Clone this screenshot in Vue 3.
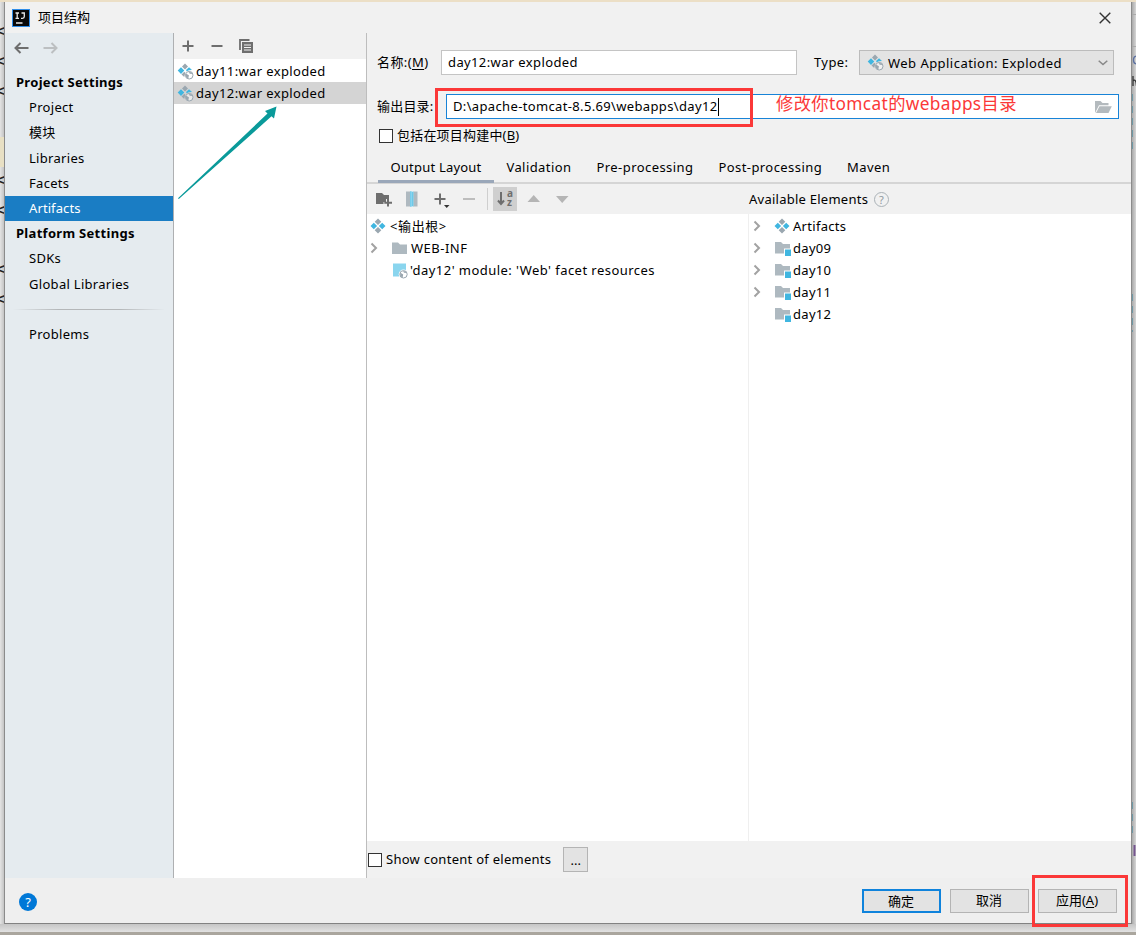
<template>
    <div class="screen">
        <div class="edge edge-left">
            <p v-for="(mark, index) in editorMarks" :key="index" :class="{ caret: index === 4 }">{{ mark }}</p>
        </div>

        <div class="window">
            <header class="title-bar">
                <svg class="logo" width="18" height="18" viewBox="0 0 18 18">
                    <rect x="0.5" y="0.5" width="17" height="17" fill="#080808" stroke="#2f8de8" />
                    <path d="M3.5 4H7M5.2 4V9M3.5 9.3H7M9.5 4H12.3V7.5Q12.3 9.3 10.5 9.3H9M4 14H10.5" fill="none"
                        stroke="#e8e8e8" stroke-width="1.3" />
                </svg>
                <span class="title">项目结构</span>
                <svg class="close" width="12" height="12" viewBox="0 0 12 12">
                    <path d="M0.7 0.7L11.3 11.3M11.3 0.7L0.7 11.3" stroke="#333" stroke-width="1.4" />
                </svg>
            </header>

            <div class="body">
                <aside class="sidebar">
                    <div class="history">
                        <svg width="15" height="12" viewBox="0 0 15 12">
                            <path d="M14.5 6H1.5M6.5 1L1.5 6L6.5 11" fill="none" stroke="#6e6e6e" stroke-width="2" />
                        </svg>
                        <svg width="15" height="12" viewBox="0 0 15 12">
                            <path d="M0.5 6H13.5M8.5 1L13.5 6L8.5 11" fill="none" stroke="#bcbfc1"
                                stroke-width="2" />
                        </svg>
                    </div>
                    <template v-for="(item, index) in menu" :key="index">
                        <div v-if="item.type === 'line'" class="menu-line"><i></i></div>
                        <div v-else class="menu-item" :class="[item.type, { active: item.label === selectedMenu }]"
                            @click="selectMenu(item)">{{ item.label }}</div>
                    </template>
                </aside>

                <section class="artifacts">
                    <div class="list-tools">
                        <svg width="12" height="12" viewBox="0 0 12 12">
                            <path d="M6 0.5V11.5M0.5 6H11.5" stroke="#6e6e6e" stroke-width="2" />
                        </svg>
                        <svg width="12" height="12" viewBox="0 0 12 12">
                            <path d="M0.5 6H11.5" stroke="#6e6e6e" stroke-width="2" />
                        </svg>
                        <svg class="copy" width="14" height="14" viewBox="0 0 14 14">
                            <path d="M1 11V1H10.5" fill="none" stroke="#6e6e6e" stroke-width="1.8" />
                            <path d="M3 3H14V14H3Z" fill="#6e6e6e" />
                            <path d="M5 6H12M5 8.5H12M5 11H12" stroke="#f1f1f1" stroke-width="1.1" />
                        </svg>
                    </div>
                    <div v-for="name in artifactList" :key="name" class="artifact"
                        :class="{ active: name === selectedArtifact }" @click="selectedArtifact = name">
                        <svg width="17" height="17" viewBox="0 0 17 17">
                            <use href="#war-icon" />
                        </svg>
                        <span>{{ name }}</span>
                    </div>
                </section>

                <main class="details">
                    <div class="form-row name-row">
                        <label class="name-label">名称:(<u>M</u>)</label>
                        <input class="name-input" v-model="artifactName" />
                        <label class="type-label">Type:</label>
                        <div class="combo">
                            <svg width="17" height="17" viewBox="0 0 17 17">
                                <use href="#war-icon" />
                            </svg>
                            <span>Web Application: Exploded</span>
                            <svg class="combo-arrow" width="10" height="6" viewBox="0 0 10 6">
                                <path d="M0.7 0.8L5 4.6L9.3 0.8" fill="none" stroke="#888" stroke-width="1.5" />
                            </svg>
                        </div>
                    </div>
                    <div class="form-row path-row">
                        <label class="path-label">输出目录:</label>
                        <div class="path-input">
                            <span>{{ outputPath }}</span><i class="cursor"></i>
                            <svg class="open-folder" width="17" height="12" viewBox="0 0 17 12">
                                <path d="M0 12V0H5.5L7.5 2H13.5V4.2H4L0.8 10.5Z" fill="#b4babe" />
                                <path d="M4.5 5.3H16.8L13.5 12H1Z" fill="#b4babe" />
                            </svg>
                        </div>
                    </div>
                    <div class="check-row include-row">
                        <i class="check"></i>
                        <span>包括在项目构建中(<u>B</u>)</span>
                    </div>

                    <nav class="tabs">
                        <span v-for="tab in tabs" :key="tab" class="tab" :class="{ active: tab === selectedTab }"
                            @click="selectedTab = tab">{{ tab }}</span>
                    </nav>

                    <div class="layout-tools">
                        <div class="tools-left">
                            <svg width="117" height="24" viewBox="0 0 117 24">
                                <path d="M0 6H6L8 8H13V12H10V15H7.5V17H0Z" fill="#6e6e6e" />
                                <path d="M12 12V19.5M8.3 15.8H16" stroke="#6e6e6e" stroke-width="2" />
                                <path d="M30 4.5H34V19.5H30ZM37 4.5H41.5V19.5H37Z" fill="#afb9c0" />
                                <path d="M34 4.5H37.5V19.5H34Z" fill="#9bdcf3" />
                                <path d="M34.8 4.5V19.5M36.6 5.5V19.5" stroke="#40b6e0" stroke-width="1.2"
                                    stroke-dasharray="1 1" />
                                <path d="M64 6.5V17.5M58.5 12H69.5" stroke="#6e6e6e" stroke-width="2" />
                                <path d="M68 18H73.5L70.7 21Z" fill="#333" />
                                <path d="M87 12H99" stroke="#bdbdbd" stroke-width="2" />
                                <path d="M111.5 1V23" stroke="#cfcfcf" />
                            </svg>
                            <div class="sort">
                                <svg width="8" height="14" viewBox="0 0 8 14">
                                    <path d="M4 0V11M1 8.5L4 12L7 8.5" fill="none" stroke="#6e6e6e"
                                        stroke-width="2" />
                                </svg>
                                <div class="letters">
                                    <span>a</span>
                                    <span>z</span>
                                </div>
                            </div>
                            <svg width="43" height="24" viewBox="0 0 43 24">
                                <path d="M0.5 15H13L6.7 8Z M29 9H41.5L35.2 16Z" fill="#b5b5b5" />
                            </svg>
                        </div>
                        <div class="tools-right">
                            <span>Available Elements</span>
                            <i class="hint">?</i>
                        </div>
                    </div>

                    <div class="trees">
                        <div class="tree output-tree">
                            <div class="node root">
                                <svg width="16" height="16" viewBox="0 0 16 16">
                                    <use href="#artifact-icon" />
                                </svg>
                                <span>&lt;输出根&gt;</span>
                            </div>
                            <div class="node">
                                <svg class="chevron" width="8" height="12" viewBox="0 0 8 12">
                                    <use href="#chevron-icon" />
                                </svg>
                                <svg width="17" height="16" viewBox="0 0 17 16">
                                    <path d="M1 2.5H7L9 4.5H16V14H1Z" fill="#aeb9c0" />
                                </svg>
                                <span class="folder">WEB-INF</span>
                            </div>
                            <div class="node">
                                <i class="chevron"></i>
                                <svg width="17" height="17" viewBox="0 0 17 17">
                                    <path d="M2 1.5H15V14.5H2Z" fill="#8ad5ee" />
                                    <circle cx="12.5" cy="12.3" r="4.8" fill="#fff" />
                                    <circle cx="12.5" cy="12.3" r="3.7" fill="#fff" stroke="#9aa7b0" />
                                    <path d="M9.2 10.6L12.2 12.4L11.6 15.8L9.2 14Z M12 9L13 10.8L15.8 11L14.6 9.4Z"
                                        fill="#9aa7b0" />
                                </svg>
                                <span class="facet">'day12' module: 'Web' facet resources</span>
                            </div>
                        </div>
                        <div class="tree element-tree">
                            <div v-for="node in elements" :key="node.name" class="node">
                                <svg class="chevron" width="8" height="12" viewBox="0 0 8 12">
                                    <use v-if="node.children" href="#chevron-icon" />
                                </svg>
                                <svg width="17" height="16" viewBox="0 0 17 16">
                                    <use :href="node.icon" />
                                </svg>
                                <span>{{ node.name }}</span>
                            </div>
                        </div>
                    </div>

                    <div class="check-row show-row">
                        <i class="check"></i>
                        <span>Show content of elements</span>
                        <button class="more">...</button>
                    </div>
                </main>
            </div>

            <footer class="footer">
                <i class="help">?</i>
                <div class="buttons">
                    <button class="btn primary">确定</button>
                    <button class="btn">取消</button>
                    <button class="btn">应用(<u>A</u>)</button>
                </div>
            </footer>
        </div>

        <div class="edge edge-right">
            <svg width="5" height="922" viewBox="0 0 5 922">
                <path d="M0 12.5H5M0 44.5H5" stroke="#aaa" />
                <path d="M1 74V84M1 79Q4 76 4.5 84" fill="none" stroke="#333" stroke-width="1.3" />
                <path d="M5 54Q1.5 54 1.5 58T5 62" fill="none" stroke="#5a6fa0" stroke-width="1.3" />
                <path d="M0.5 92V152M0.5 292V330M0.5 800V832" stroke="#6d98a5" stroke-dasharray="7 5" />
                <path d="M2.5 843V854" stroke="#75558f" stroke-width="2" />
            </svg>
        </div>

        <!-- marks drawn over the dialog -->
        <div class="mark mark-path"></div>
        <div class="mark mark-apply"></div>
        <div class="note">修改你tomcat的webapps目录</div>
        <svg class="arrow" width="102" height="98" viewBox="0 0 102 98">
            <path d="M1 94.2L90.5 9.5L88 7L99.5 2.5L97 14.5L94.5 12.3L1.8 95Z" fill="#0a9a9a" />
        </svg>

        <svg class="defs" width="0" height="0">
            <defs>
                <g id="artifact-icon">
                    <path d="M8 0.5L11.3 3.8L8 7.1L4.7 3.8Z M8 8.9L11.3 12.2L8 15.5L4.7 12.2Z" fill="#9aa7b0" />
                    <path d="M3.8 4.7L7.1 8L3.8 11.3L0.5 8Z M12.2 4.7L15.5 8L12.2 11.3L8.9 8Z" fill="#40b6e0" />
                </g>
                <g id="war-icon">
                    <path d="M8 0.5L11 3.5L8 6.5L5 3.5Z M7.3 8.7L8.3 9.7L7.2 14L4.5 11.5Z" fill="#9aa7b0" />
                    <path d="M4 4.3L7.3 7.6L4 10.9L0.7 7.6Z M9 7L12 4.3L15 7L12 7.3L9.7 8.2Z" fill="#40b6e0" />
                    <circle cx="12.2" cy="12.2" r="3.8" fill="#fff" fill-opacity="0.5" stroke="#9aa7b0" />
                    <path d="M8.9 10.5L11.9 12.3L11.3 15.7L8.9 14Z M11.7 8.9L12.7 10.7L15.5 10.9L14.3 9.3Z"
                        fill="#9aa7b0" />
                </g>
                <g id="module-icon">
                    <path d="M1 2H7L9 4H16V8.5H10V13.5H1Z" fill="#aeb9c0" />
                    <path d="M11 9.5H17V16H11Z" fill="#40b6e0" />
                </g>
                <g id="chevron-icon">
                    <path d="M1.5 1.5L6 6L1.5 10.5" fill="none" stroke="#a2a2a2" stroke-width="2" />
                </g>
            </defs>
        </svg>
    </div>
</template>

<script setup>
import { ref } from 'vue'

const editorMarks = ['<', '<', '<', '', '', '<', '<', '', '<', '<']

const menu = [
    { type: 'heading', label: 'Project Settings' },
    { type: 'item', label: 'Project' },
    { type: 'item', label: '模块' },
    { type: 'item', label: 'Libraries' },
    { type: 'item', label: 'Facets' },
    { type: 'item', label: 'Artifacts' },
    { type: 'heading', label: 'Platform Settings' },
    { type: 'item', label: 'SDKs' },
    { type: 'item', label: 'Global Libraries' },
    { type: 'line' },
    { type: 'item', label: 'Problems' }
]
const selectedMenu = ref('Artifacts')
const selectMenu = (item) => {
    if (item.type === 'item') {
        selectedMenu.value = item.label
    }
}

const artifactList = ['day11:war exploded', 'day12:war exploded']
const selectedArtifact = ref('day12:war exploded')

const artifactName = ref('day12:war exploded')
const outputPath = ref('D:\\apache-tomcat-8.5.69\\webapps\\day12')

const tabs = ['Output Layout', 'Validation', 'Pre-processing', 'Post-processing', 'Maven']
const selectedTab = ref('Output Layout')

const elements = [
    { name: 'Artifacts', icon: '#artifact-icon', children: true },
    { name: 'day09', icon: '#module-icon', children: true },
    { name: 'day10', icon: '#module-icon', children: true },
    { name: 'day11', icon: '#module-icon', children: true },
    { name: 'day12', icon: '#module-icon', children: false }
]
</script>

<style>
body {
    background: #e2e2e2;
    overflow: hidden;
}
</style>

<style scoped>
.screen {
    position: relative;
    display: flex;
    width: 1136px;
    height: 935px;
    box-sizing: border-box;
    padding-top: 2px;
    overflow: hidden;
    background: linear-gradient(#ecdfc6 2px, #d5d5d5 2px, #d5d5d5 924px, #c6c6c6 924px, #e2e2e2 932px, #aaa69e 932px);
    font-family: "Noto Sans", "Noto Sans CJK SC", sans-serif;
    font-size: 13px;
    line-height: 20px;
    color: #000;
    white-space: nowrap;
}

i {
    font-style: normal;
}

svg {
    display: block;
    flex: none;
}

u {
    text-underline-offset: 2px;
}

.edge {
    height: 922px;
    overflow: hidden;
    box-sizing: border-box;
}

.edge-left {
    width: 4px;
    flex: none;
    padding-top: 16px;
    background: linear-gradient(90deg, #e4e4e4, #c4c4c4);
}

.edge-left p {
    margin: 0 0 0 -4px;
    height: 29.8px;
    line-height: 30px;
    font-family: "Liberation Mono", monospace;
    font-size: 15px;
    font-weight: bold;
    color: #222;
}

.edge-left .caret {
    background: #e8e0c4;
}

.edge-right {
    flex: 1;
    background: linear-gradient(90deg, #a9a9a9, #d6d6d6);
}

.window {
    width: 1126px;
    height: 921px;
    flex: none;
    display: flex;
    flex-direction: column;
    border-left: 1px solid #8b8b8b;
    border-right: 1px solid #8b8b8b;
    border-bottom: 1px solid #828282;
    background: #f1f1f1;
}

.title-bar {
    height: 31px;
    flex: none;
    display: flex;
    align-items: center;
    padding: 0 20px 0 7px;
    background: #f1f1f1;
}

.title {
    margin: -2px 0 0 8px;
}

.close {
    margin-left: auto;
}

.body {
    height: 845px;
    display: flex;
}

.sidebar {
    width: 168px;
    flex: none;
    background: #e5ebef;
    border-right: 1px solid #aeb0b2;
}

.history {
    height: 37px;
    box-sizing: border-box;
    display: flex;
    gap: 14px;
    padding: 9px 0 0 9px;
}

.menu-item {
    height: 25.2px;
    line-height: 25px;
    padding-left: 24px;
    letter-spacing: 0.3px;
}

.menu-item.heading {
    padding-left: 11px;
    font-weight: bold;
}

.menu-item.active {
    background: #1a7dc4;
    color: #fff;
    letter-spacing: 0.1px;
}

.menu-line {
    height: 25.2px;
    padding: 12px 8px 0;
    box-sizing: border-box;
}

.menu-line i {
    display: block;
    height: 1px;
    background: linear-gradient(90deg, transparent, #b4b7b9 30%, #b4b7b9 70%, transparent);
}

.artifacts {
    width: 192px;
    flex: none;
    background: #fff;
    border-right: 1px solid #bdbdbd;
}

.list-tools {
    height: 26px;
    display: flex;
    align-items: center;
    gap: 17px;
    padding-left: 8px;
    background: #f1f1f1;
}

.copy {
    margin-left: -1px;
}

.artifact {
    height: 22px;
    display: flex;
    align-items: center;
    padding: 1px 0 0 3px;
    box-sizing: border-box;
}

.list-tools + .artifact {
    height: 23px;
    padding-top: 2px;
}

.artifact span {
    margin-left: 2px;
    padding-bottom: 2px;
    letter-spacing: 0.37px;
}

.artifact.active {
    background: #d4d4d4;
}

.details {
    flex: 1;
    display: flex;
    flex-direction: column;
    background: #f1f1f1;
}

.form-row {
    display: flex;
    align-items: center;
    height: 25px;
    padding-left: 10px;
}

.form-row label {
    padding-bottom: 2px;
}

.name-row {
    margin-top: 17px;
}

.name-label {
    width: 64px;
    letter-spacing: 0.4px;
}

.name-input {
    width: 356px;
    height: 25px;
    box-sizing: border-box;
    padding: 0 6px 2px;
    border: 1px solid #c4c4c4;
    background: #fff;
    font: inherit;
    letter-spacing: 0.38px;
}

.type-label {
    width: 45px;
    margin-left: 17px;
    letter-spacing: 0.4px;
}

.combo {
    width: 255px;
    height: 25px;
    box-sizing: border-box;
    display: flex;
    align-items: center;
    padding: 0 5px 0 7px;
    border: 1px solid #bcbcbc;
    background: #e3e3e3;
}

.combo span {
    margin-left: 4px;
    letter-spacing: 0.46px;
}

.combo-arrow {
    margin-left: auto;
}

.path-row {
    margin-top: 19px;
}

.path-label {
    width: 69px;
    letter-spacing: 0.2px;
}

.path-input {
    width: 673px;
    height: 25px;
    box-sizing: border-box;
    display: flex;
    align-items: center;
    padding: 0 6px;
    border: 1px solid #1883d7;
    background: #fff;
}

.path-input span {
    padding-bottom: 2px;
    letter-spacing: 0.35px;
}

.cursor {
    width: 1px;
    height: 18px;
    background: #000;
}

.open-folder {
    margin-left: auto;
}

.check-row {
    display: flex;
    align-items: center;
}

.check {
    width: 14px;
    height: 14px;
    box-sizing: border-box;
    border: 1px solid #333;
    background: #fff;
}

.check-row span {
    margin-left: 4px;
    padding-bottom: 2px;
}

.include-row {
    height: 20px;
    margin-top: 7px;
    padding-left: 12px;
}

.include-row span {
    letter-spacing: 0.2px;
}

.tabs {
    height: 38px;
    box-sizing: border-box;
    display: flex;
    align-items: flex-end;
    padding-left: 11px;
    border-bottom: 2px solid #d5d5d5;
}

.tab {
    height: 30px;
    box-sizing: border-box;
    padding: 4px 12.5px 0;
    margin-bottom: -1px;
    border-bottom: 3px solid transparent;
    letter-spacing: 0.43px;
}

.tab.active {
    border-color: #9aa7b9;
    letter-spacing: 0.2px;
}

.layout-tools {
    height: 30px;
    display: flex;
    align-items: center;
}

.tools-left {
    width: 373px;
    display: flex;
    align-items: center;
    padding-left: 9px;
}

.sort {
    width: 24px;
    height: 24px;
    display: flex;
    align-items: center;
    justify-content: center;
    gap: 2px;
    margin-right: 10px;
    background: #cfcfcf;
}

.letters {
    display: flex;
    flex-direction: column;
    padding-bottom: 2px;
}

.letters span {
    font-size: 10px;
    font-weight: bold;
    line-height: 9px;
    color: #6e6e6e;
}

.tools-right {
    display: flex;
    align-items: center;
    letter-spacing: 0.25px;
}

.hint {
    width: 15px;
    height: 15px;
    box-sizing: border-box;
    margin-left: 6px;
    border: 1px solid #aab2b7;
    border-radius: 50%;
    font-size: 11px;
    line-height: 13px;
    text-align: center;
    color: #8f989e;
}

.trees {
    height: 627px;
    display: flex;
}

.tree {
    background: #fff;
    padding-top: 1px;
    box-sizing: border-box;
}

.output-tree {
    width: 382px;
    border-right: 1px solid #efefef;
    padding-left: 3px;
}

.element-tree {
    flex: 1;
    padding-left: 4px;
}

.node {
    height: 22px;
    display: flex;
    align-items: center;
}

.node .chevron {
    width: 8px;
    margin-right: 13px;
}

.node span {
    margin-left: 2px;
    letter-spacing: 0.3px;
}

.node .folder {
    margin-left: 3px;
    letter-spacing: 0.5px;
}

.node .facet {
    letter-spacing: 0.45px;
}

.root span {
    margin-left: 4px;
    letter-spacing: 0.6px;
}

.show-row {
    height: 37px;
    padding-left: 1px;
}

.show-row span {
    letter-spacing: 0.27px;
}

.more {
    width: 25px;
    height: 25px;
    margin-left: 12px;
    padding: 0;
    border: 1px solid #b4b4b4;
    background: #e3e3e3;
    font: inherit;
}

.footer {
    flex: 1;
    display: flex;
    align-items: center;
    justify-content: space-between;
    padding: 2px 14px 0 14px;
    background: #efefef;
}

.help {
    width: 18px;
    height: 18px;
    border-radius: 50%;
    background: #0078d7;
    color: #fff;
    font-size: 13px;
    line-height: 18px;
    text-align: center;
}

.buttons {
    display: flex;
    gap: 9px;
    margin-top: -2px;
}

.btn {
    width: 79px;
    height: 24px;
    box-sizing: border-box;
    padding: 0 1px 2px 0;
    border: 1px solid #b4b4b4;
    background: #e3e3e3;
    font: inherit;
}

.btn.primary {
    border: 2px solid #0f83dc;
}

.mark {
    position: absolute;
    box-sizing: border-box;
    border: 3px solid #fb3838;
}

.mark-path {
    left: 435px;
    top: 88px;
    width: 318px;
    height: 39px;
}

.mark-apply {
    left: 1032px;
    top: 875px;
    width: 96px;
    height: 52px;
}

.note {
    position: absolute;
    left: 776px;
    top: 91px;
    font-size: 17.3px;
    line-height: 26px;
    letter-spacing: 0.36px;
    color: #fb3838;
}

.arrow {
    position: absolute;
    left: 177px;
    top: 104px;
}

.defs {
    position: absolute;
}
</style>
